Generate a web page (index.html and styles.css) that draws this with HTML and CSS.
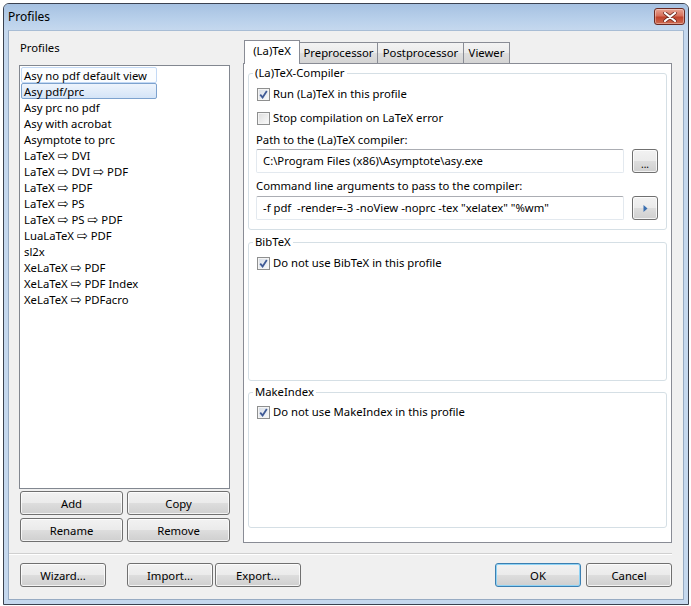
FILE: index.html
```html
<!DOCTYPE html>
<html>
<head>
<meta charset="utf-8">
<title>Profiles</title>
<link rel="stylesheet" href="styles.css">
</head>
<body>
<div class="window">
  <div class="titlebar">
    <span class="title">Profiles</span>
    <button class="close" aria-label="Close">
      <svg width="14" height="10" viewBox="0 0 14 10"><path d="M2 1 L12 9 M12 1 L2 9" stroke="#6a2a20" stroke-width="3.6" stroke-linecap="round"/><path d="M2 1 L12 9 M12 1 L2 9" stroke="#ffffff" stroke-width="2.2" stroke-linecap="round"/></svg>
    </button>
  </div>
  <div class="client">
    <div class="main">
      <div class="left">
        <div class="label">Profiles</div>
        <ul class="list">
          <li class="item focus">Asy no pdf default view</li>
          <li class="item selected">Asy pdf/prc</li>
          <li class="item">Asy prc no pdf</li>
          <li class="item">Asy with acrobat</li>
          <li class="item">Asymptote to prc</li>
          <li class="item">LaTeX <span class="ar">⇨</span> DVI</li>
          <li class="item">LaTeX <span class="ar">⇨</span> DVI <span class="ar">⇨</span> PDF</li>
          <li class="item">LaTeX <span class="ar">⇨</span> PDF</li>
          <li class="item">LaTeX <span class="ar">⇨</span> PS</li>
          <li class="item">LaTeX <span class="ar">⇨</span> PS <span class="ar">⇨</span> PDF</li>
          <li class="item">LuaLaTeX <span class="ar">⇨</span> PDF</li>
          <li class="item">sl2x</li>
          <li class="item">XeLaTeX <span class="ar">⇨</span> PDF</li>
          <li class="item">XeLaTeX <span class="ar">⇨</span> PDF Index</li>
          <li class="item">XeLaTeX <span class="ar">⇨</span> PDFacro</li>
        </ul>
        <div class="btngrid">
          <button class="btn">Add</button>
          <button class="btn">Copy</button>
          <button class="btn">Rename</button>
          <button class="btn">Remove</button>
        </div>
      </div>
      <div class="right">
        <div class="tabs">
          <div class="tab active">(La)TeX</div>
          <div class="tab t-pre">Preprocessor</div>
          <div class="tab t-post">Postprocessor</div>
          <div class="tab t-view">Viewer</div>
        </div>
        <div class="pane">
          <fieldset class="group g1">
            <legend>(La)TeX-Compiler</legend>
            <label class="check first"><span class="box on"><svg width="9" height="9" viewBox="0 0 9 9"><path d="M1.2 4.6 L3.6 7.4 L7.8 1" fill="none" stroke="#3f5a96" stroke-width="1.8"/></svg></span>Run (La)TeX in this profile</label>
            <label class="check second"><span class="box"></span>Stop compilation on LaTeX error</label>
            <div class="flabel l1">Path to the (La)TeX compiler:</div>
            <div class="row">
              <div class="edit">C:\Program Files (x86)\Asymptote\asy.exe</div>
              <button class="tool">...</button>
            </div>
            <div class="flabel l2">Command line arguments to pass to the compiler:</div>
            <div class="row r2">
              <div class="edit">-f pdf&nbsp; -render=-3 -noView -noprc -tex "xelatex" "%wm"</div>
              <button class="tool"><svg width="5" height="7" viewBox="0 0 5 7"><path d="M0.5 0 L4.5 3.5 L0.5 7 Z" fill="#3a6fb0"/></svg></button>
            </div>
          </fieldset>
          <fieldset class="group g2">
            <legend>BibTeX</legend>
            <label class="check first"><span class="box on"><svg width="9" height="9" viewBox="0 0 9 9"><path d="M1.2 4.6 L3.6 7.4 L7.8 1" fill="none" stroke="#3f5a96" stroke-width="1.8"/></svg></span>Do not use BibTeX in this profile</label>
          </fieldset>
          <fieldset class="group g3">
            <legend>MakeIndex</legend>
            <label class="check first g3c"><span class="box on"><svg width="9" height="9" viewBox="0 0 9 9"><path d="M1.2 4.6 L3.6 7.4 L7.8 1" fill="none" stroke="#3f5a96" stroke-width="1.8"/></svg></span>Do not use MakeIndex in this profile</label>
          </fieldset>
        </div>
      </div>
    </div>
    <div class="sep"></div>
    <div class="footer">
      <button class="btn fb">Wizard...</button>
      <button class="btn fb b-import">Import...</button>
      <button class="btn fb b-export">Export...</button>
      <span class="spacer"></span>
      <button class="btn fb default">OK</button>
      <button class="btn fb b-cancel">Cancel</button>
    </div>
  </div>
</div>
</body>
</html>
```

FILE: styles.css
```css
* { box-sizing: border-box; }
html, body { margin: 0; padding: 0; background: #ffffff; }
body {
  font-family: "Noto Sans", "DejaVu Sans", sans-serif;
  font-size: 11.3px;
  color: #000000;
  width: 691px;
  height: 606px;
  overflow: hidden;
}
.window {
  margin: 3px 0 0 3px;
  width: 686px;
  height: 602px;
  border: 1px solid #3b4250;
  border-radius: 6px 6px 0 0;
  background: #c5d8ee;
  padding: 0 4px 4px 4px;
  display: flex;
  flex-direction: column;
}
.titlebar {
  height: 26px;
  margin: 0 -4px;
  padding: 0 3px 0 4px;
  border-radius: 5px 5px 0 0;
  background: linear-gradient(#a6c1e1, #b7cfea 55%, #c5d8ee);
  display: flex;
  align-items: flex-start;
}
.title {
  font-size: 12px;
  line-height: 16px;
  margin-top: 5px;
  color: #000;
}
.close {
  margin-left: auto;
  margin-top: 4px;
  width: 31px;
  height: 17px;
  padding: 0;
  border: 1px solid #6b2a22;
  border-radius: 3px;
  background: linear-gradient(#e8a493, #d7715c 45%, #c0432c 55%, #cd6a50);
  box-shadow: inset 0 0 0 1px rgba(255,255,255,0.35);
  display: flex;
  align-items: center;
  justify-content: center;
}
.client {
  flex: 1;
  background: #f0f0f0;
  border: 1px solid #97abc3;
  border-top-color: #a8bdd5;
  padding: 9px 11px 0 10px;
  display: flex;
  flex-direction: column;
}
.main {
  display: grid;
  grid-template-columns: 211px 429px;
  column-gap: 13px;
}
.left { display: flex; flex-direction: column; }
.label { line-height: 16px; height: 16px; margin-bottom: 9px; padding-left: 1px; }
.list {
  list-style: none;
  margin: 0;
  padding: 1px 0 0 1px;
  height: 424px;
  background: #ffffff;
  border: 1px solid #828790;
}
.item {
  height: 16px;
  line-height: 15px;
  padding-left: 2px;
  width: 136px;
  white-space: nowrap;
  border: 1px solid transparent;
  border-radius: 2px;
}
.item.focus { border-color: #c3d9f5; background: #fbfdff; }
.item.selected {
  border-color: #7da2ce;
  background: linear-gradient(#eef4fc, #d4e4f7);
}
.ar { font-family: "DejaVu Sans", sans-serif; font-size: 13px; line-height: 10px; }
.btngrid {
  margin-top: 2px;
  padding-left: 1px;
  display: grid;
  grid-template-columns: 103px 103px;
  column-gap: 4px;
  row-gap: 3px;
}
.btn {
  font-family: inherit;
  font-size: 11.3px;
  color: #000;
  height: 24px;
  padding: 0;
  border: 1px solid #707070;
  border-radius: 3px;
  background: linear-gradient(#f2f2f2 0%, #ebebeb 48%, #dddddd 52%, #cfcfcf 100%);
  box-shadow: inset 0 0 0 1px rgba(255,255,255,0.75);
}
.right { display: flex; flex-direction: column; }
.tabs { display: flex; height: 23px; align-items: flex-end; padding-left: 1px; position: relative; z-index: 1; }
.tab {
  height: 21px;
  line-height: 19px;
  text-align: center;
  border: 1px solid #898c95;
  border-bottom: none;
  background: linear-gradient(#f3f3f3, #ebebeb 50%, #dedede 50%, #d4d4d4);
  margin-left: -1px;
}
.tab.active {
  width: 56px;
  line-height: 20px;
  background: #ffffff;
  margin-left: 0;
  margin-bottom: -1px;
  height: 24px;
}
.t-pre { width: 79px; }
.t-post { width: 87px; }
.t-view { width: 47px; }
.pane {
  height: 480px;
  background: #ffffff;
  border: 1px solid #898c95;
  padding: 1px 4px 0 4px;
  display: flex;
  flex-direction: column;
}
.group {
  margin: 0;
  border: 1px solid #d5dfe5;
  border-radius: 3px;
  padding: 0 8px 0 7px;
  display: flex;
  flex-direction: column;
}
.group legend {
  padding: 0 2px;
  margin-left: -3px;
  line-height: 16px;
}
.g1 { height: 165px; }
.g2 { height: 147px; margin-top: 4px; }
.g3 { height: 144px; margin-top: 3px; }
.check {
  display: flex;
  align-items: center;
  height: 16px;
  line-height: 16px;
}
.check.first { margin-top: 5px; }
.check.g3c { margin-top: 4px; }
.check.second { margin-top: 8px; }
.box {
  width: 13px;
  height: 13px;
  margin: 0 3px 0 1px;
  border: 1px solid #8e8f8f;
  background: linear-gradient(135deg, #dcdcdc, #fbfbfb);
  box-shadow: inset 0 0 0 1px #f4f4f4;
  display: flex;
  align-items: center;
  justify-content: center;
  flex: none;
}
.box.on { background: linear-gradient(135deg, #d7dde6, #f7f9fb); }
.flabel { line-height: 16px; height: 16px; }
.l1 { margin-top: 6px; }
.l2 { margin-top: 5px; }
.row { display: flex; gap: 8px; margin-top: 1px; }
.r2 { margin-top: 2px; }
.edit {
  width: 368px;
  height: 24px;
  line-height: 22px;
  padding-left: 6px;
  border: 1px solid #e3e9ef;
  border-top-color: #abadb3;
  border-radius: 2px;
  background: #ffffff;
  white-space: pre;
  overflow: hidden;
}
.tool {
  width: 26px;
  height: 24px;
  padding: 0 0 3px 0;
  font-family: inherit;
  font-size: 10px;
  line-height: 10px;
  border: 1px solid #707070;
  border-radius: 3px;
  background: linear-gradient(#f2f2f2 0%, #ebebeb 48%, #dddddd 52%, #cfcfcf 100%);
  box-shadow: inset 0 0 0 1px rgba(255,255,255,0.75);
  display: flex;
  align-items: flex-end;
  justify-content: center;
}
.r2 .tool { align-items: center; padding: 0 0 0 1px; }
.sep {
  margin: 10px 0 0 -10px;
  width: 663px;
  height: 2px;
  border-top: 1px solid #d0d0d0;
  border-bottom: 1px solid #ffffff;
}
.footer {
  margin-top: 8px;
  padding-left: 1px;
  display: flex;
}
.fb { width: 86px; }
.b-import { margin-left: 21px; }
.b-export { margin-left: 2px; }
.spacer { flex: 1; }
.b-cancel { margin-left: 5px; }
.default {
  border-color: #3c7fb1;
  box-shadow: inset 0 0 0 1px #8fd3f5;
}
```
